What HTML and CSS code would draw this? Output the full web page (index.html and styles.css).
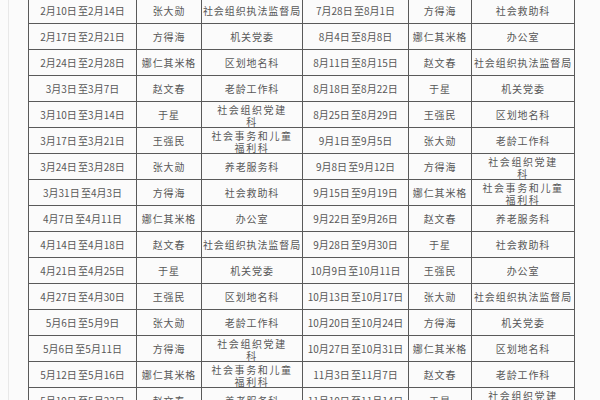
FILE: index.html
```html
<!DOCTYPE html>
<html lang="zh">
<head>
<meta charset="utf-8">
<link rel="stylesheet" href="styles.css">
</head>
<body>
<div class="page">
  <table class="duty">
    <colgroup>
      <col class="c-date"><col class="c-name"><col class="c-dept">
      <col class="c-date2"><col class="c-name2"><col class="c-dept2">
    </colgroup>
    <tbody>
      <tr><td class="d"><div class="cell">2月10日 至2月14日</div></td><td><div class="cell">张大勋</div></td><td><div class="cell">社会组织执法监督局</div></td><td class="d"><div class="cell">7月28日 至8月1日</div></td><td><div class="cell">方得海</div></td><td><div class="cell">社会救助科</div></td></tr>
      <tr><td class="d"><div class="cell">2月17日 至2月21日</div></td><td><div class="cell">方得海</div></td><td><div class="cell">机关党委</div></td><td class="d"><div class="cell">8月4日 至8月8日</div></td><td><div class="cell">娜仁其米格</div></td><td><div class="cell">办公室</div></td></tr>
      <tr><td class="d"><div class="cell">2月24日 至2月28日</div></td><td><div class="cell">娜仁其米格</div></td><td><div class="cell">区划地名科</div></td><td class="d"><div class="cell">8月11日 至8月15日</div></td><td><div class="cell">赵文春</div></td><td><div class="cell">社会组织执法监督局</div></td></tr>
      <tr><td class="d"><div class="cell">3月3日 至3月7日</div></td><td><div class="cell">赵文春</div></td><td><div class="cell">老龄工作科</div></td><td class="d"><div class="cell">8月18日 至8月22日</div></td><td><div class="cell">于星</div></td><td><div class="cell">机关党委</div></td></tr>
      <tr><td class="d"><div class="cell">3月10日 至3月14日</div></td><td><div class="cell">于星</div></td><td class="w"><div class="cell">社会组织党建<br>科</div></td><td class="d"><div class="cell">8月25日 至8月29日</div></td><td><div class="cell">王强民</div></td><td><div class="cell">区划地名科</div></td></tr>
      <tr><td class="d"><div class="cell">3月17日 至3月21日</div></td><td><div class="cell">王强民</div></td><td class="w"><div class="cell">社会事务和儿童<br>福利科</div></td><td class="d"><div class="cell">9月1日 至9月5日</div></td><td><div class="cell">张大勋</div></td><td><div class="cell">老龄工作科</div></td></tr>
      <tr><td class="d"><div class="cell">3月24日 至3月28日</div></td><td><div class="cell">张大勋</div></td><td><div class="cell">养老服务科</div></td><td class="d"><div class="cell">9月8日 至9月12日</div></td><td><div class="cell">方得海</div></td><td class="w"><div class="cell">社会组织党建<br>科</div></td></tr>
      <tr><td class="d"><div class="cell">3月31日 至4月3日</div></td><td><div class="cell">方得海</div></td><td><div class="cell">社会救助科</div></td><td class="d"><div class="cell">9月15日 至9月19日</div></td><td><div class="cell">娜仁其米格</div></td><td class="w"><div class="cell">社会事务和儿童<br>福利科</div></td></tr>
      <tr><td class="d"><div class="cell">4月7日 至4月11日</div></td><td><div class="cell">娜仁其米格</div></td><td><div class="cell">办公室</div></td><td class="d"><div class="cell">9月22日 至9月26日</div></td><td><div class="cell">赵文春</div></td><td><div class="cell">养老服务科</div></td></tr>
      <tr><td class="d"><div class="cell">4月14日 至4月18日</div></td><td><div class="cell">赵文春</div></td><td><div class="cell">社会组织执法监督局</div></td><td class="d"><div class="cell">9月28日 至9月30日</div></td><td><div class="cell">于星</div></td><td><div class="cell">社会救助科</div></td></tr>
      <tr><td class="d"><div class="cell">4月21日 至4月25日</div></td><td><div class="cell">于星</div></td><td><div class="cell">机关党委</div></td><td class="d"><div class="cell">10月9日 至10月11日</div></td><td><div class="cell">王强民</div></td><td><div class="cell">办公室</div></td></tr>
      <tr><td class="d"><div class="cell">4月27日 至4月30日</div></td><td><div class="cell">王强民</div></td><td><div class="cell">区划地名科</div></td><td class="d"><div class="cell">10月13日 至10月17日</div></td><td><div class="cell">张大勋</div></td><td><div class="cell">社会组织执法监督局</div></td></tr>
      <tr><td class="d"><div class="cell">5月6日 至5月9日</div></td><td><div class="cell">张大勋</div></td><td><div class="cell">老龄工作科</div></td><td class="d"><div class="cell">10月20日 至10月24日</div></td><td><div class="cell">方得海</div></td><td><div class="cell">机关党委</div></td></tr>
      <tr><td class="d"><div class="cell">5月6日 至5月11日</div></td><td><div class="cell">方得海</div></td><td class="w"><div class="cell">社会组织党建<br>科</div></td><td class="d"><div class="cell">10月27日 至10月31日</div></td><td><div class="cell">娜仁其米格</div></td><td><div class="cell">区划地名科</div></td></tr>
      <tr><td class="d"><div class="cell">5月12日 至5月16日</div></td><td><div class="cell">娜仁其米格</div></td><td class="w"><div class="cell">社会事务和儿童<br>福利科</div></td><td class="d"><div class="cell">11月3日 至11月7日</div></td><td><div class="cell">赵文春</div></td><td><div class="cell">老龄工作科</div></td></tr>
      <tr><td class="d"><div class="cell">5月19日 至5月23日</div></td><td><div class="cell">赵文春</div></td><td><div class="cell">养老服务科</div></td><td class="d"><div class="cell">11月10日 至11月14日</div></td><td><div class="cell">于星</div></td><td class="w"><div class="cell">社会组织党建<br>科</div></td></tr>
    </tbody>
  </table>
</div>
</body>
</html>
```

FILE: styles.css
```css
html, body {
  margin: 0;
  padding: 0;
  background: #fbfbfb;
  overflow: hidden;
}
.page {
  width: 592px;
  height: 400px;
  overflow: hidden;
  box-sizing: border-box;
  margin-left: 8px;
  padding-left: 19px;
  border-left: 1px solid #e8e8e8;
}
.duty {
  border-collapse: collapse;
  table-layout: fixed;
  width: 546px;
  margin-top: -3px;
  font-family: "Noto Sans CJK SC", "Noto Sans", sans-serif;
  color: #585858;
}
.c-date { width: 108px; }
.c-name { width: 65px; }
.c-dept { width: 101px; }
.c-date2 { width: 106px; }
.c-name2 { width: 63px; }
.c-dept2 { width: 103px; }
.duty td {
  border: 1px solid #5a5a5a;
  padding: 0;
  text-align: center;
  vertical-align: top;
  font-size: 10px;
  letter-spacing: 0.9px;
  white-space: nowrap;
}
.cell {
  height: 25px;
  line-height: 25px;
  overflow: hidden;
}
.duty td.d {
  letter-spacing: 0;
  word-spacing: -1px;
}
.duty td.w .cell {
  line-height: 11.5px;
  padding-top: 2px;
  height: 23px;
  letter-spacing: 1.6px;
}
```
